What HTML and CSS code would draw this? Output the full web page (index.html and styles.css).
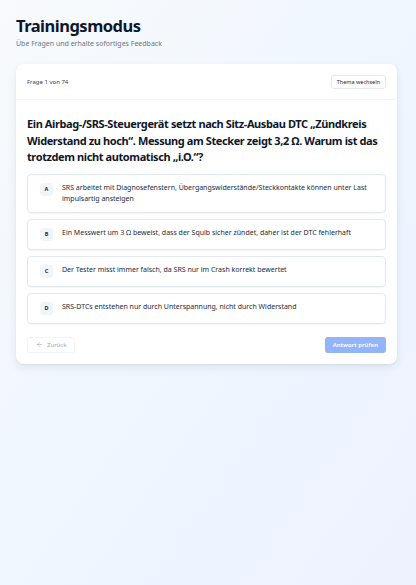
FILE: index.html
```html
<!DOCTYPE html>
<html lang="de">
<head>
    <meta charset="UTF-8">
    <meta name="viewport" content="width=device-width, initial-scale=1.0">
    <title>Trainingsmodus</title>
    <link rel="stylesheet" href="styles.css">
</head>
<body>
    <header class="page-head">
        <h1>Trainingsmodus</h1>
        <p class="subtitle">Übe Fragen und erhalte sofortiges Feedback</p>
    </header>

    <main class="quiz-card">
        <div class="quiz-top">
            <span class="counter">Frage 1 von 74</span>
            <button class="topic-btn">Thema wechseln</button>
        </div>

        <div class="quiz-body">
            <h2 class="question">Ein Airbag-/SRS-Steuergerät setzt nach Sitz-Ausbau DTC „Zündkreis Widerstand zu hoch“. Messung am Stecker zeigt 3,2 Ω. Warum ist das trotzdem nicht automatisch „i.O.“?</h2>

            <ul class="answers">
                <li class="answer">
                    <span class="letter">A</span>
                    <span class="answer-text">SRS arbeitet mit Diagnosefenstern, Übergangswiderstände/Steckkontakte können unter Last impulsartig ansteigen</span>
                </li>
                <li class="answer">
                    <span class="letter">B</span>
                    <span class="answer-text">Ein Messwert um 3 Ω beweist, dass der Squib sicher zündet, daher ist der DTC fehlerhaft</span>
                </li>
                <li class="answer">
                    <span class="letter">C</span>
                    <span class="answer-text">Der Tester misst immer falsch, da SRS nur im Crash korrekt bewertet</span>
                </li>
                <li class="answer">
                    <span class="letter">D</span>
                    <span class="answer-text">SRS-DTCs entstehen nur durch Unterspannung, nicht durch Widerstand</span>
                </li>
            </ul>

            <div class="quiz-nav">
                <button class="back-btn">
                    <svg width="7" height="7" viewBox="0 0 24 24" fill="none" stroke="currentColor" stroke-width="2" stroke-linecap="round" stroke-linejoin="round"><path d="M19 12H5"/><path d="M12 19l-7-7 7-7"/></svg>
                    Zurück
                </button>
                <button class="check-btn" disabled>Antwort prüfen</button>
            </div>
        </div>
    </main>
</body>
</html>
```

FILE: styles.css
```css
* {
    box-sizing: border-box;
}

html {
    min-height: 100%;
    background: linear-gradient(to bottom right, #f8fafc, #eff6ff 55%, #eef2ff);
}

body {
    margin: 0;
    padding: 14px 19px 16px 16px;
    font-family: "Noto Sans", "Open Sans", sans-serif;
    color: #0f172a;
}

.page-head h1 {
    margin: 0;
    font-size: 16.5px;
    line-height: 24px;
    font-weight: 700;
    letter-spacing: -0.5px;
    color: #0f172a;
}

.subtitle {
    margin: 1px 0 0;
    font-size: 7px;
    line-height: 10px;
    color: #64748b;
}

.quiz-card {
    margin-top: 15px;
    background: #ffffff;
    border-radius: 8px;
    box-shadow: 0 4px 10px rgba(15, 23, 42, 0.08), 0 1px 2px rgba(15, 23, 42, 0.05);
}

.quiz-top {
    display: flex;
    align-items: center;
    justify-content: space-between;
    height: 36px;
    padding: 0 11px;
    border-bottom: 1px solid #f1f5f9;
}

.counter {
    font-size: 6px;
    color: #334155;
}

.topic-btn {
    font-family: inherit;
    font-size: 5.5px;
    color: #1e293b;
    background: #ffffff;
    border: 1px solid #e2e8f0;
    border-radius: 3px;
    height: 14px;
    padding: 0 5px;
}

.quiz-body {
    padding: 16px 11px 11px;
}

.question {
    margin: 0;
    font-size: 11px;
    line-height: 16.5px;
    font-weight: 700;
    letter-spacing: -0.4px;
    color: #0f172a;
}

.answers {
    list-style: none;
    margin: 8px 0 0;
    padding: 0;
    display: flex;
    flex-direction: column;
    gap: 6px;
}

.answer {
    display: flex;
    align-items: flex-start;
    gap: 9px;
    padding: 7px 12px 8px;
    border: 1px solid #e2e8f0;
    border-radius: 4px;
    box-shadow: 0 1px 1px rgba(15, 23, 42, 0.04);
}

.letter {
    flex: none;
    width: 13px;
    height: 13px;
    display: flex;
    align-items: center;
    justify-content: center;
    margin-top: 1px;
    font-size: 5.5px;
    font-weight: 700;
    color: #1e293b;
    background: #f1f5f9;
    border-radius: 3px;
}

.answer-text {
    font-size: 7px;
    line-height: 11px;
    color: #1e293b;
}

.quiz-nav {
    display: flex;
    justify-content: space-between;
    margin-top: 13px;
}

.back-btn,
.check-btn {
    font-family: inherit;
    height: 16px;
    border-radius: 3px;
    font-size: 6px;
    display: flex;
    align-items: center;
    gap: 4px;
}

.back-btn {
    padding: 0 8px;
    color: #94a3b8;
    background: #ffffff;
    border: 1px solid #f1f5f9;
}

.check-btn {
    padding: 0 8px;
    color: #ffffff;
    font-weight: 600;
    background: #93b4f7;
    border: none;
}
```
